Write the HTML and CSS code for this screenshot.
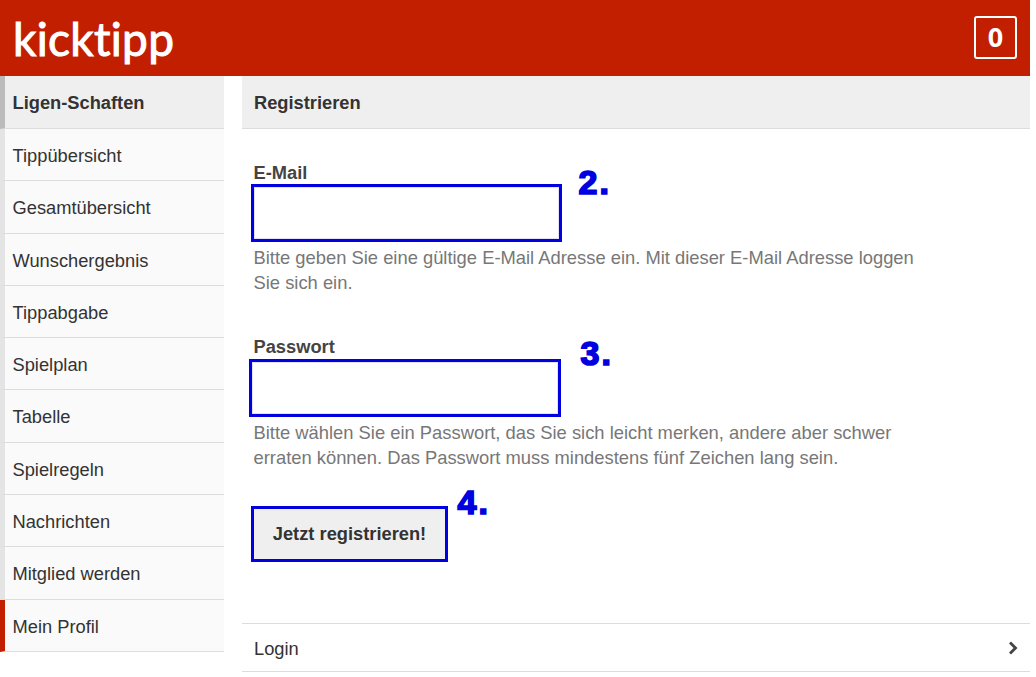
FILE: index.html
```html
<!DOCTYPE html>
<html lang="de">

<head>
    <meta charset="UTF-8">
    <meta name="viewport" content="width=device-width, initial-scale=1.0">
    <title>kicktipp - Registrieren</title>
    <link rel="stylesheet" href="styles.css">
</head>

<body>
    <div class="page">
        <header class="topbar">
            <span class="logo">kicktipp</span>
            <span class="count">0</span>
        </header>

        <div class="layout">
            <nav class="sidenav">
                <a class="nav-item nav-head">Ligen-Schaften</a>
                <a class="nav-item">Tippübersicht</a>
                <a class="nav-item">Gesamtübersicht</a>
                <a class="nav-item">Wunschergebnis</a>
                <a class="nav-item">Tippabgabe</a>
                <a class="nav-item">Spielplan</a>
                <a class="nav-item">Tabelle</a>
                <a class="nav-item">Spielregeln</a>
                <a class="nav-item">Nachrichten</a>
                <a class="nav-item">Mitglied werden</a>
                <a class="nav-item nav-active">Mein Profil</a>
            </nav>

            <main class="content">
                <h1 class="title">Registrieren</h1>

                <form class="form">
                    <div class="field field-mail">
                        <label for="email">E-Mail</label>
                        <input type="text" id="email" name="email">
                        <span class="step step-mail">2.</span>
                        <p class="hint">Bitte geben Sie eine gültige E-Mail Adresse ein. Mit dieser E-Mail Adresse loggen Sie sich ein.</p>
                    </div>

                    <div class="field field-pass">
                        <label for="passwort">Passwort</label>
                        <input type="password" id="passwort" name="passwort">
                        <span class="step step-pass">3.</span>
                        <p class="hint">Bitte wählen Sie ein Passwort, das Sie sich leicht merken, andere aber schwer erraten können. Das Passwort muss mindestens fünf Zeichen lang sein.</p>
                    </div>

                    <div class="field field-submit">
                        <button type="submit">Jetzt registrieren!</button>
                        <span class="step step-submit">4.</span>
                    </div>
                </form>

                <a class="login-row">
                    <span>Login</span>
                    <svg class="chevron" width="10" height="14" viewBox="0 0 10 14">
                        <path d="M2 1.5 L7.5 7 L2 12.5" fill="none" stroke="#444" stroke-width="2.8"></path>
                    </svg>
                </a>
            </main>
        </div>
    </div>
</body>

</html>
```

FILE: styles.css
```css
html,
body {
    margin: 0;
    padding: 0;
    overflow: hidden;
    background: white;
}

body {
    font-family: "Liberation Sans", Arial, sans-serif;
    font-size: 18.3px;
    color: #333;
}

.page {
    width: 1030px;
}

.topbar {
    display: flex;
    align-items: center;
    justify-content: space-between;
    height: 76px;
    padding: 0 13px;
    box-sizing: border-box;
    background-color: #c21f00;
}

.logo {
    font-family: Lato, sans-serif;
    font-size: 46px;
    font-weight: 400;
    font-variant-ligatures: none;
    letter-spacing: 0.3px;
    color: white;
    -webkit-text-stroke: 1px white;
}

.count {
    width: 43px;
    height: 43px;
    margin-bottom: 1px;
    box-sizing: border-box;
    border: 2px solid white;
    border-radius: 3px;
    font-family: "Open Sans", sans-serif;
    font-size: 27px;
    font-weight: 700;
    line-height: 38px;
    text-align: center;
    color: white;
}

.layout {
    display: flex;
    gap: 18px;
}

.sidenav {
    width: 224px;
    flex-shrink: 0;
}

.nav-item {
    display: block;
    height: 52.3px;
    box-sizing: border-box;
    padding-left: 7.5px;
    border-left: 5px solid #e4e4e4;
    border-bottom: 1px solid #ddd;
    background-color: #fafafa;
    line-height: 54px;
}

.nav-head {
    height: 53px;
    border-left-color: #bbb;
    background-color: #efefef;
    font-weight: bold;
    line-height: 54px;
}

.nav-active {
    border-left-color: #c21f00;
}

.content {
    flex: 1;
}

.title {
    margin: 0;
    height: 53px;
    box-sizing: border-box;
    padding-left: 12px;
    border-bottom: 1px solid #ddd;
    background-color: #efefef;
    font-size: 18.3px;
    line-height: 54px;
}

.form {
    padding-left: 11.5px;
}

.field {
    position: relative;
}

.field-mail {
    padding-top: 34px;
}

.field-pass {
    padding-top: 41px;
}

.field-submit {
    padding-top: 35px;
}

.field label {
    display: block;
    height: 21px;
    font-weight: bold;
    line-height: 19px;
    color: #444;
}

.field input {
    display: block;
    box-sizing: border-box;
    width: 311px;
    height: 58px;
    margin: 0 0 0 -2.5px;
    border: 3px solid #0000e0;
    background: white;
    outline: none;
    box-shadow: inset 0 0 0 1px #e2e2f4;
}

.field-pass label {
    height: 22px;
}

.field-pass input {
    margin-left: -4.5px;
    width: 312px;
}

.hint {
    width: 672px;
    margin: 3px 0 1px;
    color: #777;
    font-size: 18.38px;
    line-height: 25px;
}

.field button {
    display: block;
    width: 197px;
    height: 56px;
    margin-left: -2.5px;
    border: 3px solid #0000e0;
    background-color: #efefef;
    color: #333;
    font-family: inherit;
    font-size: 18.3px;
    font-weight: bold;
    cursor: pointer;
}

/* blaue Ziffern liegen frei neben den Feldern */
.step {
    position: absolute;
    font-size: 34px;
    font-weight: bold;
    line-height: 40px;
    letter-spacing: 2px;
    color: #0000e0;
    -webkit-text-stroke: 1.7px #0000e0;
}

.step-mail {
    left: 325px;
    top: 33px;
}

.step-pass {
    left: 327px;
    top: 37px;
}

.step-submit {
    left: 204px;
    top: 11px;
}

.login-row {
    display: flex;
    align-items: center;
    justify-content: space-between;
    height: 49px;
    box-sizing: border-box;
    margin-top: 61px;
    padding: 2px 12px 0;
    border-top: 1px solid #ddd;
    border-bottom: 1px solid #ddd;
}

.chevron {
    margin-bottom: 2px;
}
```
